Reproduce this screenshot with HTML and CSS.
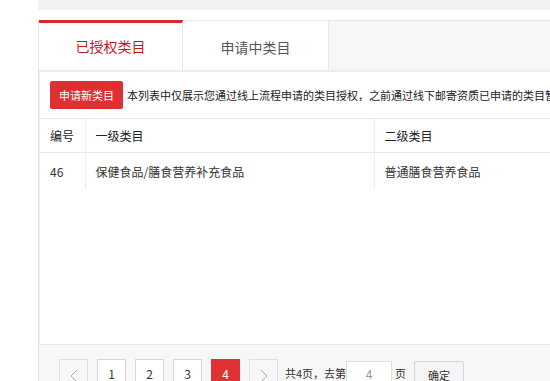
FILE: index.html
```html
<!DOCTYPE html>
<html lang="zh-CN">
<head>
<meta charset="utf-8">
<title>已授权类目</title>
<link rel="stylesheet" href="styles.css">
</head>
<body>
<div class="main">
  <div class="topbar"></div>
  <div class="box">
    <div class="tabs">
      <div class="tab active">已授权类目</div>
      <div class="tab">申请中类目</div>
    </div>
    <div class="panel">
      <div class="toolbar">
        <button class="btn-red">申请新类目</button>
        <span class="notice">本列表中仅展示您通过线上流程申请的类目授权，之前通过线下邮寄资质已申请的类目暂不在此展示</span>
      </div>
      <table class="grid">
        <colgroup>
          <col class="c1"><col class="c2"><col class="c3">
        </colgroup>
        <thead>
          <tr><th>编号</th><th>一级类目</th><th>二级类目</th></tr>
        </thead>
        <tbody>
          <tr><td>46</td><td>保健食品/膳食营养补充食品</td><td>普通膳食营养食品</td></tr>
        </tbody>
      </table>
    </div>
    <div class="pager">
      <span class="pg pg-arrow"><svg width="8" height="14" viewBox="0 0 8 14"><polyline points="7,1 1,7 7,13" fill="none" stroke="#a8a8a8" stroke-width="1"/></svg></span>
      <span class="pg">1</span>
      <span class="pg">2</span>
      <span class="pg">3</span>
      <span class="pg pg-cur">4</span>
      <span class="pg pg-arrow"><svg width="8" height="14" viewBox="0 0 8 14"><polyline points="1,1 7,7 1,13" fill="none" stroke="#a8a8a8" stroke-width="1"/></svg></span>
      <span class="pg-text">共4页，去第</span>
      <span class="pg-input">4</span>
      <span class="pg-text2">页</span>
      <span class="pg-ok">确定</span>
    </div>
  </div>
</div>
</body>
</html>
```
FILE: styles.css
```css
html, body {
  margin: 0;
  padding: 0;
  overflow: hidden;
  background: #fff;
}
body {
  font-family: "Noto Sans CJK SC", "Microsoft YaHei", sans-serif;
  font-size: 12px;
  color: #333;
}
.main {
  margin-left: 38px;
  width: 700px;
}
.topbar {
  height: 10px;
  background: #f2f2f2;
}
.box {
  margin-top: 10px;
  border-left: 1px solid #e6e6e6;
}
.tabs {
  display: flex;
  height: 49px;
  background: #f7f7f7;
  border-top: 1px solid #e8e8e8;
  border-bottom: 2px solid #ececec;
}
.tab {
  width: 144px;
  height: 50px;
  margin-top: -1px;
  box-sizing: border-box;
  background: #fff;
  display: flex;
  align-items: center;
  justify-content: center;
  font-size: 14px;
  color: #555;
  border-right: 1px solid #e8e8e8;
  border-top: 1px solid #e8e8e8;
}
.tab.active {
  color: #c8161d;
  border-top: 3px solid #d7272b;
  padding-bottom: 2px;
}
.tab + .tab {
  width: 146px;
  padding-top: 2px;
}
.panel {
  height: 272px;
  border-left: 1px solid #ececec;
  background: #fff;
}
.toolbar {
  height: 47px;
  display: flex;
  align-items: center;
  padding-left: 10px;
  border-bottom: 1px solid #e8e8e8;
  white-space: nowrap;
  box-sizing: border-box;
}
.btn-red {
  height: 28px;
  width: 73px;
  border: 0;
  border-radius: 2px;
  background: #de3033;
  color: #fff;
  font-family: inherit;
  font-size: 11px;
  padding: 0;
  margin-right: 4px;
}
.notice {
  color: #222;
  font-size: 11px;
}
.grid {
  border-collapse: collapse;
  table-layout: fixed;
  width: 660px;
}
.c1 { width: 45px; }
.c2 { width: 289px; }
.c3 { width: 326px; }
.grid th, .grid td {
  text-align: left;
  padding: 0 0 0 10px;
  font-weight: normal;
  color: #333;
  border-left: 1px solid #eee;
}
.grid th:first-child, .grid td:first-child {
  border-left: 0;
}
.grid th {
  height: 33px;
  color: #222;
  border-bottom: 1px solid #e8e8e8;
}
.grid td {
  height: 35px;
  padding-top: 1px;
}
.pager {
  height: 60px;
  background: #f7f7f7;
  border-top: 1px solid #e6e6e6;
  display: flex;
  align-items: flex-start;
  padding: 14px 0 0 20px;
  box-sizing: border-box;
}
.pg {
  width: 29px;
  height: 28px;
  box-sizing: border-box;
  border: 1px solid #d6d6d6;
  background: #fff;
  margin-right: 9px;
  display: flex;
  align-items: center;
  justify-content: center;
  color: #333;
}
.pg-arrow {
  background: #f7f7f7;
  border-color: #e0e0e0;
  padding-top: 6px;
}
.pg-cur {
  background: #e03134;
  border-color: #e03134;
  color: #fff;
}
.pg-text {
  margin-left: -2px;
  line-height: 28px;
  font-size: 11px;
  color: #333;
}
.pg-input {
  margin-top: 2px;
  width: 46px;
  height: 26px;
  box-sizing: border-box;
  border: 1px solid #ddd;
  background: #fff;
  color: #999;
  text-align: center;
  line-height: 24px;
}
.pg-text2 {
  margin-left: 3px;
  line-height: 28px;
  font-size: 11px;
}
.pg-ok {
  margin-left: 8px;
  margin-top: 2px;
  width: 50px;
  height: 28px;
  box-sizing: border-box;
  border: 1px solid #d6d6d6;
  border-radius: 2px;
  background: #f5f5f5;
  text-align: center;
  line-height: 26px;
  font-size: 11px;
  color: #333;
}
```
